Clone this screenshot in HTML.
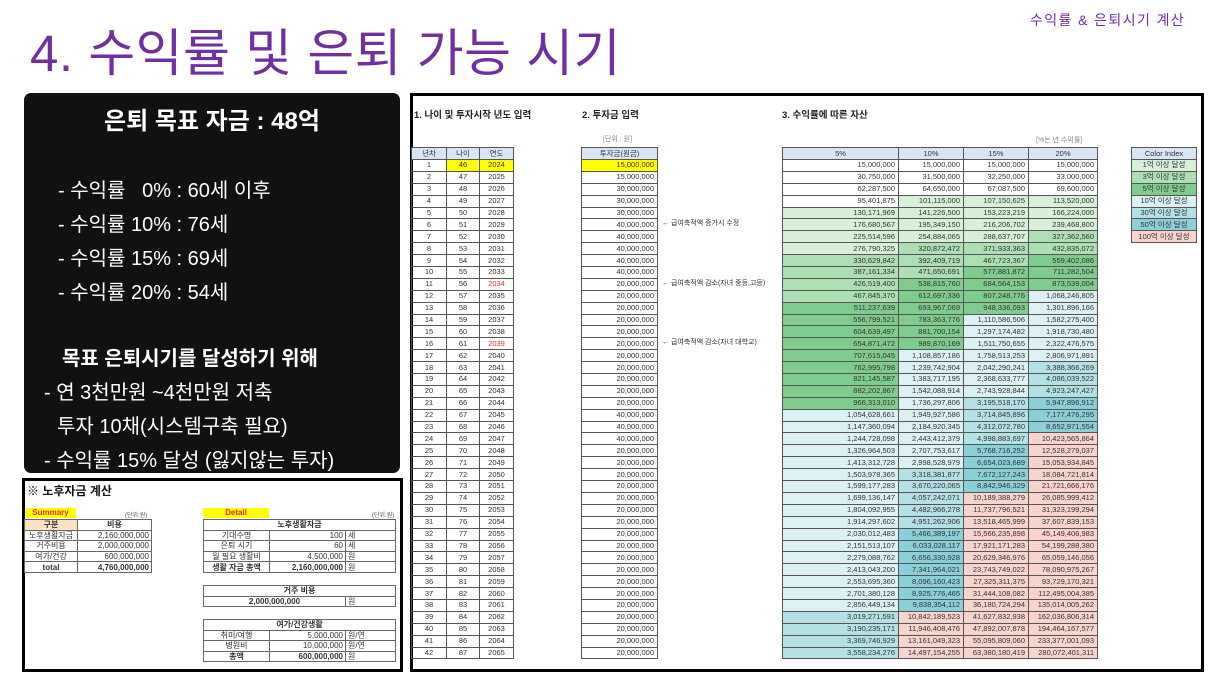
<!DOCTYPE html>
<html><head><meta charset="utf-8">
<style>
*{margin:0;padding:0;box-sizing:border-box}
body{width:1216px;height:684px;background:#fff;position:relative;overflow:hidden;font-family:"Liberation Sans","Noto Sans CJK KR",sans-serif}
.abs{position:absolute}
h1{position:absolute;left:30px;top:12px;font-size:51px;font-weight:400;color:#7030a0;letter-spacing:0.5px;white-space:nowrap}
.tr{position:absolute;left:1030px;top:10px;font-size:14px;letter-spacing:1.4px;color:#7030a0;white-space:nowrap}
.blk{position:absolute;left:24px;top:93px;width:376px;height:380px;background:#111;border-radius:7px;color:#fff}
.blk div{position:absolute;white-space:nowrap;font-size:20px}
.sheet{position:absolute;left:410px;top:93px;width:794px;height:579px;border:3px solid #000;background:#fff}
table{border-collapse:collapse;position:absolute;font-size:7.5px;color:#333;table-layout:fixed}
td{border:1px solid #555;height:11.9px;line-height:10px;padding:0 3px;white-space:nowrap;overflow:hidden}
.t td{text-align:center}
.n td{text-align:right}
thead td{background:#d9e4f5;text-align:center!important;height:12px}
.y{background:#ffff00}
.b{background:#d8f0d9}.c{background:#ace0b4}.d{background:#80cc8d}.e{background:#dcf1f3}.f{background:#b3e1e6}.g{background:#8bd0d9}.h{background:#f9d3cd}
.red{color:#e03030}
.sec{position:absolute;top:107px;font-size:9.5px;font-weight:bold;color:#222}
.note{position:absolute;left:662px;font-size:7px;color:#333;white-space:nowrap}
.bot{position:absolute;left:22px;top:478px;width:381px;height:194px;border:3px solid #000;background:#fff}
.s{font-size:8px;color:#333}
.s td{height:10.6px;line-height:9px;border:1px solid #666;padding:0 2px}
</style></head><body>
<h1>4. 수익률 및 은퇴 가능 시기</h1>
<div class="tr">수익률 &amp; 은퇴시기 계산</div>

<div class="blk">
<div style="left:0;width:376px;text-align:center;top:8px;font-size:24px;font-weight:bold">은퇴 목표 자금 : 48억</div>
<div style="left:34px;top:81px">- 수익률&nbsp;&nbsp;&nbsp;0% : 60세 이후</div>
<div style="left:34px;top:115px">- 수익률 10% : 76세</div>
<div style="left:34px;top:149px">- 수익률 15% : 69세</div>
<div style="left:34px;top:183px">- 수익률 20% : 54세</div>
<div style="left:38px;top:249px;font-weight:bold">목표 은퇴시기를 달성하기 위해</div>
<div style="left:20px;top:283px">- 연 3천만원 ~4천만원 저축</div>
<div style="left:33px;top:317px">투자 10채(시스템구축 필요)</div>
<div style="left:20px;top:351px">- 수익률 15% 달성 (잃지않는 투자)</div>
</div>

<div class="sheet"></div>
<div class="sec" style="left:414px">1. 나이 및 투자시작 년도 입력</div>
<div class="sec" style="left:582px">2. 투자금 입력</div>
<div class="sec" style="left:782px">3. 수익률에 따른 자산</div>
<div class="abs" style="left:603px;top:134px;font-size:7px;color:#888">[단위 : 원]</div>
<div class="abs" style="left:1036px;top:135px;font-size:7px;color:#888">[%는 년 수익률]</div>

<table class="t" style="left:411px;top:147px;width:102px">
<colgroup><col style="width:35px"><col style="width:33px"><col style="width:34px"></colgroup>
<thead><tr><td>년차</td><td>나이</td><td>연도</td></tr></thead>
<tr><td>1</td><td class="y">46</td><td class="y">2024</td></tr>
<tr><td>2</td><td>47</td><td>2025</td></tr>
<tr><td>3</td><td>48</td><td>2026</td></tr>
<tr><td>4</td><td>49</td><td>2027</td></tr>
<tr><td>5</td><td>50</td><td>2028</td></tr>
<tr><td>6</td><td>51</td><td>2029</td></tr>
<tr><td>7</td><td>52</td><td>2030</td></tr>
<tr><td>8</td><td>53</td><td>2031</td></tr>
<tr><td>9</td><td>54</td><td>2032</td></tr>
<tr><td>10</td><td>55</td><td>2033</td></tr>
<tr><td>11</td><td>56</td><td class="red">2034</td></tr>
<tr><td>12</td><td>57</td><td>2035</td></tr>
<tr><td>13</td><td>58</td><td>2036</td></tr>
<tr><td>14</td><td>59</td><td>2037</td></tr>
<tr><td>15</td><td>60</td><td>2038</td></tr>
<tr><td>16</td><td>61</td><td class="red">2039</td></tr>
<tr><td>17</td><td>62</td><td>2040</td></tr>
<tr><td>18</td><td>63</td><td>2041</td></tr>
<tr><td>19</td><td>64</td><td>2042</td></tr>
<tr><td>20</td><td>65</td><td>2043</td></tr>
<tr><td>21</td><td>66</td><td>2044</td></tr>
<tr><td>22</td><td>67</td><td>2045</td></tr>
<tr><td>23</td><td>68</td><td>2046</td></tr>
<tr><td>24</td><td>69</td><td>2047</td></tr>
<tr><td>25</td><td>70</td><td>2048</td></tr>
<tr><td>26</td><td>71</td><td>2049</td></tr>
<tr><td>27</td><td>72</td><td>2050</td></tr>
<tr><td>28</td><td>73</td><td>2051</td></tr>
<tr><td>29</td><td>74</td><td>2052</td></tr>
<tr><td>30</td><td>75</td><td>2053</td></tr>
<tr><td>31</td><td>76</td><td>2054</td></tr>
<tr><td>32</td><td>77</td><td>2055</td></tr>
<tr><td>33</td><td>78</td><td>2056</td></tr>
<tr><td>34</td><td>79</td><td>2057</td></tr>
<tr><td>35</td><td>80</td><td>2058</td></tr>
<tr><td>36</td><td>81</td><td>2059</td></tr>
<tr><td>37</td><td>82</td><td>2060</td></tr>
<tr><td>38</td><td>83</td><td>2061</td></tr>
<tr><td>39</td><td>84</td><td>2062</td></tr>
<tr><td>40</td><td>85</td><td>2063</td></tr>
<tr><td>41</td><td>86</td><td>2064</td></tr>
<tr><td>42</td><td>87</td><td>2065</td></tr>
</table>

<table class="n" style="left:581px;top:147px;width:77px">
<thead><tr><td>투자금(원금)</td></tr></thead>
<tr><td class="y">15,000,000</td></tr>
<tr><td>15,000,000</td></tr>
<tr><td>30,000,000</td></tr>
<tr><td>30,000,000</td></tr>
<tr><td>30,000,000</td></tr>
<tr><td>40,000,000</td></tr>
<tr><td>40,000,000</td></tr>
<tr><td>40,000,000</td></tr>
<tr><td>40,000,000</td></tr>
<tr><td>40,000,000</td></tr>
<tr><td>20,000,000</td></tr>
<tr><td>20,000,000</td></tr>
<tr><td>20,000,000</td></tr>
<tr><td>20,000,000</td></tr>
<tr><td>20,000,000</td></tr>
<tr><td>20,000,000</td></tr>
<tr><td>20,000,000</td></tr>
<tr><td>20,000,000</td></tr>
<tr><td>20,000,000</td></tr>
<tr><td>20,000,000</td></tr>
<tr><td>20,000,000</td></tr>
<tr><td>40,000,000</td></tr>
<tr><td>40,000,000</td></tr>
<tr><td>40,000,000</td></tr>
<tr><td>20,000,000</td></tr>
<tr><td>20,000,000</td></tr>
<tr><td>20,000,000</td></tr>
<tr><td>20,000,000</td></tr>
<tr><td>20,000,000</td></tr>
<tr><td>20,000,000</td></tr>
<tr><td>20,000,000</td></tr>
<tr><td>20,000,000</td></tr>
<tr><td>20,000,000</td></tr>
<tr><td>20,000,000</td></tr>
<tr><td>20,000,000</td></tr>
<tr><td>20,000,000</td></tr>
<tr><td>20,000,000</td></tr>
<tr><td>20,000,000</td></tr>
<tr><td>20,000,000</td></tr>
<tr><td>20,000,000</td></tr>
<tr><td>20,000,000</td></tr>
<tr><td>20,000,000</td></tr>
</table>
<div class="note" style="top:218px">← 급여축적액 증가시 수정</div>
<div class="note" style="top:278px">← 급여축적액 감소(자녀 중등,고등)</div>
<div class="note" style="top:337px">← 급여축적액 감소(자녀 대학교)</div>

<table class="n" style="left:782px;top:147px;width:315px">
<colgroup><col style="width:116px"><col style="width:65px"><col style="width:65px"><col style="width:69px"></colgroup>
<thead><tr><td>5%</td><td>10%</td><td>15%</td><td>20%</td></tr></thead>
<tr><td>15,000,000</td><td>15,000,000</td><td>15,000,000</td><td>15,000,000</td></tr>
<tr><td>30,750,000</td><td>31,500,000</td><td>32,250,000</td><td>33,000,000</td></tr>
<tr><td>62,287,500</td><td>64,650,000</td><td>67,087,500</td><td>69,600,000</td></tr>
<tr><td>95,401,875</td><td class="b">101,115,000</td><td class="b">107,150,625</td><td class="b">113,520,000</td></tr>
<tr><td class="b">130,171,969</td><td class="b">141,226,500</td><td class="b">153,223,219</td><td class="b">166,224,000</td></tr>
<tr><td class="b">176,680,567</td><td class="b">195,349,150</td><td class="b">216,206,702</td><td class="b">239,468,800</td></tr>
<tr><td class="b">225,514,596</td><td class="b">254,884,065</td><td class="b">288,637,707</td><td class="c">327,362,560</td></tr>
<tr><td class="b">276,790,325</td><td class="c">320,872,472</td><td class="c">371,933,363</td><td class="c">432,835,072</td></tr>
<tr><td class="c">330,629,842</td><td class="c">392,409,719</td><td class="c">467,723,367</td><td class="d">559,402,086</td></tr>
<tr><td class="c">387,161,334</td><td class="c">471,650,691</td><td class="d">577,881,872</td><td class="d">711,282,504</td></tr>
<tr><td class="c">426,519,400</td><td class="d">538,815,760</td><td class="d">684,564,153</td><td class="d">873,539,004</td></tr>
<tr><td class="c">467,845,370</td><td class="d">612,697,336</td><td class="d">807,248,776</td><td class="e">1,068,246,805</td></tr>
<tr><td class="d">511,237,639</td><td class="d">693,967,069</td><td class="d">948,336,093</td><td class="e">1,301,896,166</td></tr>
<tr><td class="d">556,799,521</td><td class="d">783,363,776</td><td class="e">1,110,586,506</td><td class="e">1,582,275,400</td></tr>
<tr><td class="d">604,639,497</td><td class="d">881,700,154</td><td class="e">1,297,174,482</td><td class="e">1,918,730,480</td></tr>
<tr><td class="d">654,871,472</td><td class="d">989,870,169</td><td class="e">1,511,750,655</td><td class="e">2,322,476,575</td></tr>
<tr><td class="d">707,615,045</td><td class="e">1,108,857,186</td><td class="e">1,758,513,253</td><td class="e">2,806,971,891</td></tr>
<tr><td class="d">762,995,798</td><td class="e">1,239,742,904</td><td class="e">2,042,290,241</td><td class="f">3,388,366,269</td></tr>
<tr><td class="d">821,145,587</td><td class="e">1,383,717,195</td><td class="e">2,368,633,777</td><td class="f">4,086,039,522</td></tr>
<tr><td class="d">882,202,867</td><td class="e">1,542,088,914</td><td class="e">2,743,928,844</td><td class="f">4,923,247,427</td></tr>
<tr><td class="d">966,313,010</td><td class="e">1,736,297,806</td><td class="f">3,195,518,170</td><td class="g">5,947,896,912</td></tr>
<tr><td class="e">1,054,628,661</td><td class="e">1,949,927,586</td><td class="f">3,714,845,896</td><td class="g">7,177,476,295</td></tr>
<tr><td class="e">1,147,360,094</td><td class="e">2,184,920,345</td><td class="f">4,312,072,780</td><td class="g">8,652,971,554</td></tr>
<tr><td class="e">1,244,728,098</td><td class="e">2,443,412,379</td><td class="f">4,998,883,697</td><td class="h">10,423,565,864</td></tr>
<tr><td class="e">1,326,964,503</td><td class="e">2,707,753,617</td><td class="g">5,768,716,252</td><td class="h">12,528,279,037</td></tr>
<tr><td class="e">1,413,312,728</td><td class="e">2,998,528,979</td><td class="g">6,654,023,689</td><td class="h">15,053,934,845</td></tr>
<tr><td class="e">1,503,978,365</td><td class="f">3,318,381,877</td><td class="g">7,672,127,243</td><td class="h">18,084,721,814</td></tr>
<tr><td class="e">1,599,177,283</td><td class="f">3,670,220,065</td><td class="g">8,842,946,329</td><td class="h">21,721,666,176</td></tr>
<tr><td class="e">1,699,136,147</td><td class="f">4,057,242,071</td><td class="h">10,189,388,279</td><td class="h">26,085,999,412</td></tr>
<tr><td class="e">1,804,092,955</td><td class="f">4,482,966,278</td><td class="h">11,737,796,521</td><td class="h">31,323,199,294</td></tr>
<tr><td class="e">1,914,297,602</td><td class="f">4,951,262,906</td><td class="h">13,518,465,999</td><td class="h">37,607,839,153</td></tr>
<tr><td class="e">2,030,012,483</td><td class="g">5,466,389,197</td><td class="h">15,566,235,898</td><td class="h">45,149,406,983</td></tr>
<tr><td class="e">2,151,513,107</td><td class="g">6,033,028,117</td><td class="h">17,921,171,283</td><td class="h">54,199,288,380</td></tr>
<tr><td class="e">2,279,088,762</td><td class="g">6,656,330,928</td><td class="h">20,629,346,976</td><td class="h">65,059,146,056</td></tr>
<tr><td class="e">2,413,043,200</td><td class="g">7,341,964,021</td><td class="h">23,743,749,022</td><td class="h">78,090,975,267</td></tr>
<tr><td class="e">2,553,695,360</td><td class="g">8,096,160,423</td><td class="h">27,325,311,375</td><td class="h">93,729,170,321</td></tr>
<tr><td class="e">2,701,380,128</td><td class="g">8,925,776,465</td><td class="h">31,444,108,082</td><td class="h">112,495,004,385</td></tr>
<tr><td class="e">2,856,449,134</td><td class="g">9,838,354,112</td><td class="h">36,180,724,294</td><td class="h">135,014,005,262</td></tr>
<tr><td class="f">3,019,271,591</td><td class="h">10,842,189,523</td><td class="h">41,627,832,938</td><td class="h">162,036,806,314</td></tr>
<tr><td class="f">3,190,235,171</td><td class="h">11,946,408,476</td><td class="h">47,892,007,878</td><td class="h">194,464,167,577</td></tr>
<tr><td class="f">3,369,746,929</td><td class="h">13,161,049,323</td><td class="h">55,095,809,060</td><td class="h">233,377,001,093</td></tr>
<tr><td class="f">3,558,234,276</td><td class="h">14,497,154,255</td><td class="h">63,380,180,419</td><td class="h">280,072,401,311</td></tr>
</table>

<table class="t" style="left:1131px;top:147px;width:66px">
<thead><tr><td>Color Index</td></tr></thead>
<tr><td class="b">1억 이상 달성</td></tr>
<tr><td class="c">3억 이상 달성</td></tr>
<tr><td class="d">5억 이상 달성</td></tr>
<tr><td class="e">10억 이상 달성</td></tr>
<tr><td class="f">30억 이상 달성</td></tr>
<tr><td class="g">50억 이상 달성</td></tr>
<tr><td class="h">100억 이상 달성</td></tr>
</table>

<div class="bot"></div>
<div class="abs" style="left:27px;top:482px;font-size:12px;font-weight:bold;color:#111">※ 노후자금 계산</div>
<div class="abs s" style="left:25px;top:508px;width:51px;height:10px;background:#ffff00;color:#e03030;font-weight:bold;text-align:center;line-height:10px">Summary</div>
<div class="abs" style="left:125px;top:510px;font-size:6px;color:#555">(단위:원)</div>
<table class="s" style="left:24px;top:519px;width:127px">
<colgroup><col style="width:53px"><col style="width:74px"></colgroup>
<tr><td style="background:#fbe2c2;text-align:center;font-weight:bold">구분</td><td style="text-align:center;font-weight:bold">비용</td></tr>
<tr><td style="text-align:center">노후생활자금</td><td style="text-align:right">2,160,000,000</td></tr>
<tr><td style="text-align:center">거주비용</td><td style="text-align:right">2,000,000,000</td></tr>
<tr><td style="text-align:center">여가/건강</td><td style="text-align:right">600,000,000</td></tr>
<tr><td style="text-align:center;font-weight:bold">total</td><td style="text-align:right;font-weight:bold">4,760,000,000</td></tr>
</table>
<div class="abs s" style="left:203px;top:508px;width:66px;height:10px;background:#ffff00;color:#e03030;font-weight:bold;text-align:center;line-height:10px">Detail</div>
<div class="abs" style="left:372px;top:510px;font-size:6px;color:#555">(단위:원)</div>
<table class="s" style="left:203px;top:519px;width:192px">
<colgroup><col style="width:66px"><col style="width:76px"><col style="width:50px"></colgroup>
<tr><td colspan="3" style="text-align:center;font-weight:bold">노후생활자금</td></tr>
<tr><td style="text-align:center">기대수명</td><td style="text-align:right">100</td><td>세</td></tr>
<tr><td style="text-align:center">은퇴 시기</td><td style="text-align:right">60</td><td>세</td></tr>
<tr><td style="text-align:center">월 필요 생활비</td><td style="text-align:right">4,500,000</td><td>원</td></tr>
<tr><td style="text-align:center;font-weight:bold">생활 자금 총액</td><td style="text-align:right;font-weight:bold">2,160,000,000</td><td>원</td></tr>
</table>
<table class="s" style="left:203px;top:585px;width:192px">
<colgroup><col style="width:142px"><col style="width:50px"></colgroup>
<tr><td colspan="2" style="text-align:center;font-weight:bold">거주 비용</td></tr>
<tr><td style="text-align:center;font-weight:bold">2,000,000,000</td><td>원</td></tr>
</table>
<table class="s" style="left:203px;top:619px;width:192px">
<colgroup><col style="width:66px"><col style="width:76px"><col style="width:50px"></colgroup>
<tr><td colspan="3" style="text-align:center;font-weight:bold">여가/건강생활</td></tr>
<tr><td style="text-align:center">취미/여행</td><td style="text-align:right">5,000,000</td><td>원/연</td></tr>
<tr><td style="text-align:center">병원비</td><td style="text-align:right">10,000,000</td><td>원/연</td></tr>
<tr><td style="text-align:center;font-weight:bold">총액</td><td style="text-align:right;font-weight:bold">600,000,000</td><td>원</td></tr>
</table>
</body></html>
